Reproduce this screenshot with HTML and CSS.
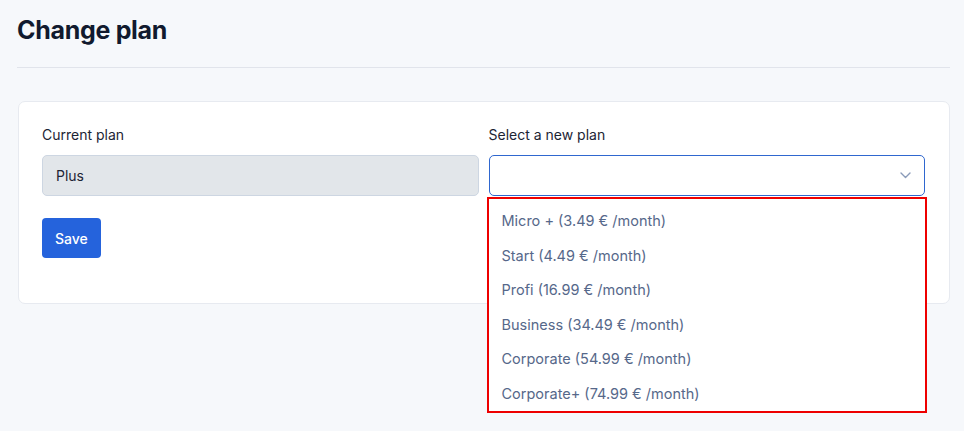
FILE: index.html
```html
<!DOCTYPE html>
<html lang="en">
<head>
  <meta charset="UTF-8" />
  <meta name="viewport" content="width=device-width, initial-scale=1.0"/>
  <title>Change plan</title>
  <link rel="stylesheet" href="styles.css">
</head>
<body>

<div class="page">
  <h1 class="page-title">Change plan</h1>

  <div class="card">
    <form class="plan-form">
      <div class="form-grid">
        <!-- Current plan (read only) -->
        <div class="field">
          <label>Current plan</label>
          <div class="input input-disabled">Plus</div>
        </div>

        <!-- New plan picker, opened -->
        <div class="field">
          <label>Select a new plan</label>
          <div class="select-wrap">
            <div class="select select-open">
              <svg class="chevron" width="11" height="7" viewBox="0 0 11 7">
                <path d="M1 1l4.5 4.5L10 1" fill="none" stroke="#8a9bb9" stroke-width="1.4" stroke-linecap="round" stroke-linejoin="round"/>
              </svg>
            </div>
            <ul class="options">
              <li>Micro + (3.49 € /month)</li>
              <li>Start (4.49 € /month)</li>
              <li>Profi (16.99 € /month)</li>
              <li>Business (34.49 € /month)</li>
              <li>Corporate (54.99 € /month)</li>
              <li>Corporate+ (74.99 € /month)</li>
            </ul>
          </div>
        </div>
      </div>

      <div class="actions">
        <button type="submit">Save</button>
      </div>
    </form>
  </div>
</div>

</body>
</html>
```

FILE: styles.css
```css
* {
  box-sizing: border-box;
}

html, body {
  height: 100%;
}

body {
  margin: 0;
  padding: 0;
  font-family: Inter, 'Noto Sans', sans-serif;
  background: #f6f8fb;
  color: #1c2434;
}

.page {
  min-height: 100%;
  padding: 0 14px 0 17px;
}

.page-title {
  margin: 0;
  padding: 13px 0 20px;
  font-size: 25px;
  font-weight: 700;
  line-height: 34px;
  color: #111a2e;
  letter-spacing: -0.3px;
  border-bottom: 1px solid #e1e4eb;
}

.card {
  margin-top: 33px;
  margin-left: 1px;
  background: #fff;
  border: 1px solid #e7eaf0;
  border-radius: 7px;
  padding: 23px 24px 45px 23px;
}

.form-grid {
  display: flex;
  gap: 10px;
}

.field {
  flex: 1;
}

label {
  display: block;
  font-size: 14px;
  line-height: 20px;
  color: #1c2434;
  margin-bottom: 10px;
}

.input {
  height: 41px;
  padding: 0 13px;
  border: 1px solid #cdd6e2;
  border-radius: 5px;
  font-size: 14px;
  line-height: 39px;
}

.input-disabled {
  background: #e2e6ea;
  color: #1c2434;
}

.select-wrap {
  position: relative;
}

.select {
  height: 41px;
  border: 1px solid #cdd6e2;
  border-radius: 5px;
  background: #fff;
  display: flex;
  align-items: center;
  justify-content: flex-end;
  padding-right: 13px;
}

.select-open {
  border-color: #2f67cf;
}

/* opened option list sits over the card edge */
.options {
  position: absolute;
  top: calc(100% + 3px);
  left: 0;
  right: 0;
  margin: 0;
  padding: 5px 0 0;
  list-style: none;
  background: #fff;
  outline: 2px solid #ee0000;
  z-index: 2;
}

.options li {
  padding: 7px 13px;
  font-size: 14.5px;
  line-height: 20.5px;
  color: #56688a;
}

.actions {
  margin-top: 22px;
}

button {
  height: 40px;
  padding: 0 13px;
  font-family: inherit;
  font-size: 14px;
  font-weight: 500;
  color: #fff;
  background: #2563dc;
  border: none;
  border-radius: 4px;
  cursor: pointer;
}
```
